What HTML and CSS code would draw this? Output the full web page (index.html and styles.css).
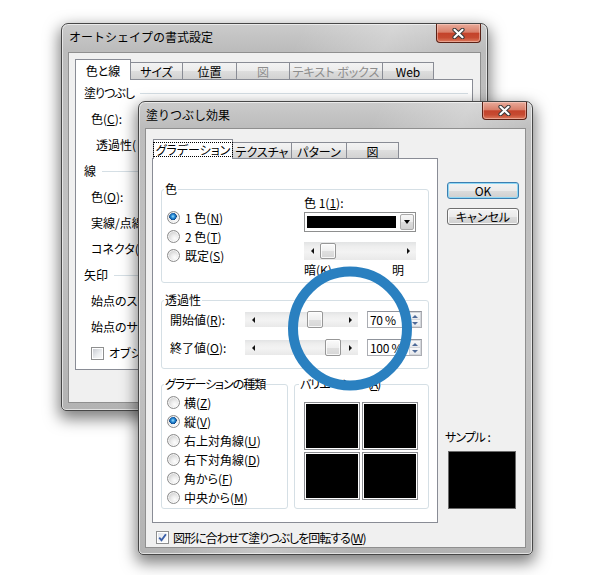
FILE: index.html
```html
<!DOCTYPE html>
<html lang="ja">
<head>
<meta charset="utf-8">
<title>塗りつぶし効果</title>
<link rel="stylesheet" href="styles.css">
</head>
<body>
<div class="desktop">

  <section class="win win-back">
    <header class="titlebar">
      <span class="title">オートシェイプの書式設定</span>
      <span class="close"><svg width="13" height="11" viewBox="0 0 13 11"><path d="M2.5 1.8L10.5 9.2M10.5 1.8L2.5 9.2" stroke="#3a3a3a" stroke-width="4.2" stroke-linecap="round"/><path d="M2.5 1.8L10.5 9.2M10.5 1.8L2.5 9.2" stroke="#fff" stroke-width="2.2" stroke-linecap="round"/></svg></span>
    </header>
    <div class="client client-back">
      <div class="tabs tabs-back">
        <span class="tab sel t-color">色と線</span>
        <span class="tab t-size">サイズ</span>
        <span class="tab t-pos">位置</span>
        <span class="tab dis t-pic">図</span>
        <span class="tab dis t-text">テキスト ボックス</span>
        <span class="tab t-web">Web</span>
      </div>
      <div class="panel panel-back">
        <div class="orow head"><span class="tk">塗りつぶし</span></div>
        <div class="orow item">色(<u>C</u>):</div>
        <div class="orow item sub">透過性(</div>
        <div class="orow head">線</div>
        <div class="orow item">色(<u>O</u>):</div>
        <div class="orow item">実線/点線</div>
        <div class="orow item">コネクタ(<u>N</u></div>
        <div class="orow head">矢印</div>
        <div class="orow item">始点のスタ</div>
        <div class="orow item">始点のサイ</div>
        <div class="orow item"><span class="checkbox"></span><span class="cb-label">オブジェ</span></div>
      </div>
    </div>
  </section>

  <section class="win win-front">
    <header class="titlebar">
      <span class="title">塗りつぶし効果</span>
      <span class="close"><svg width="13" height="11" viewBox="0 0 13 11"><path d="M2.5 1.8L10.5 9.2M10.5 1.8L2.5 9.2" stroke="#3a3a3a" stroke-width="4.2" stroke-linecap="round"/><path d="M2.5 1.8L10.5 9.2M10.5 1.8L2.5 9.2" stroke="#fff" stroke-width="2.2" stroke-linecap="round"/></svg></span>
    </header>
    <div class="client client-front">
      <div class="main">
        <div class="sheet">
          <div class="tabs tabs-front">
            <span class="tab sel t-grad"><span class="focus">グラデーション</span></span>
            <span class="tab t-tex">テクスチャ</span>
            <span class="tab t-pat">パターン</span>
            <span class="tab t-pic2">図</span>
          </div>
          <div class="panel panel-front">

            <div class="group g-color">
              <span class="group-title">色</span>
              <div class="g1-body">
                <div class="radio-col">
                  <div class="radio-row"><span class="radio on"></span><span>1 色(<u>N</u>)</span></div>
                  <div class="radio-row"><span class="radio"></span><span>2 色(<u>T</u>)</span></div>
                  <div class="radio-row"><span class="radio"></span><span>既定(<u>S</u>)</span></div>
                </div>
                <div class="color-col">
                  <div class="lbl">色 1(<u>1</u>):</div>
                  <div class="combo"><span class="swatch"></span><span class="cbtn"><i class="tri-down"></i></span></div>
                  <div class="hscroll tall">
                    <span class="sbtn"><i class="arr-l"></i></span>
                    <span class="track"><span class="thumb" style="margin-left:0px"></span></span>
                    <span class="sbtn"><i class="arr-r"></i></span>
                  </div>
                  <div class="dk-row"><span>暗(<u>K</u>)</span><span>明</span></div>
                </div>
              </div>
            </div>

            <div class="group g-trans">
              <span class="group-title">透過性</span>
              <div class="g2-body">
                <div class="trow">
                  <span class="tlabel">開始値(<u>R</u>):</span>
                  <div class="hscroll">
                    <span class="sbtn"><i class="arr-l"></i></span>
                    <span class="track"><span class="thumb" style="margin-left:46px"></span></span>
                    <span class="sbtn"><i class="arr-r"></i></span>
                  </div>
                  <div class="spin"><span class="spin-val">70 %</span><span class="updown"><span class="ud"><i class="arr-u"></i></span><span class="ud"><i class="arr-d"></i></span></span></div>
                </div>
                <div class="trow">
                  <span class="tlabel">終了値(<u>O</u>):</span>
                  <div class="hscroll">
                    <span class="sbtn"><i class="arr-l"></i></span>
                    <span class="track"><span class="thumb" style="margin-left:64px"></span></span>
                    <span class="sbtn"><i class="arr-r"></i></span>
                  </div>
                  <div class="spin"><span class="spin-val">100 %</span><span class="updown"><span class="ud"><i class="arr-u"></i></span><span class="ud"><i class="arr-d"></i></span></span></div>
                </div>
              </div>
            </div>

            <div class="types">
              <div class="group g-type">
                <span class="group-title tk">グラデーションの種類</span>
                <div class="g3-body">
                  <div class="radio-row"><span class="radio"></span><span>横(<u>Z</u>)</span></div>
                  <div class="radio-row"><span class="radio on"></span><span>縦(<u>V</u>)</span></div>
                  <div class="radio-row"><span class="radio"></span><span>右上対角線(<u>U</u>)</span></div>
                  <div class="radio-row"><span class="radio"></span><span>右下対角線(<u>D</u>)</span></div>
                  <div class="radio-row"><span class="radio"></span><span>角から(<u>F</u>)</span></div>
                  <div class="radio-row"><span class="radio"></span><span>中央から(<u>M</u>)</span></div>
                </div>
              </div>
              <div class="group g-var">
                <span class="group-title tk">バリエーション(<u>A</u>)</span>
                <div class="vgrid">
                  <span class="cell"></span><span class="cell"></span>
                  <span class="cell"></span><span class="cell"></span>
                </div>
              </div>
            </div>

          </div>
        </div>
        <div class="buttons">
          <button class="btn default">OK</button>
          <button class="btn">キャンセル</button>
          <div class="sample">
            <div class="sample-label"><span class="tk">サンプル</span> :</div>
            <div class="sample-box"></div>
          </div>
        </div>
      </div>
      <div class="check-row">
        <span class="checkbox on"><svg width="9" height="9" viewBox="0 0 9 9"><path d="M1.2 4.6L3.5 7.2L7.9 1.2" fill="none" stroke="#3a5fa8" stroke-width="1.9"/></svg></span>
        <span class="tk">図形に合わせて塗りつぶしを回転する(<u>W</u>)</span>
      </div>
    </div>
  </section>

  <svg class="mark" width="592" height="575" viewBox="0 0 592 575">
    <circle cx="350" cy="328.5" r="57" fill="none" stroke="#2a80c0" stroke-width="10"/>
  </svg>
</div>
</body>
</html>
```

FILE: styles.css
```css
* { box-sizing: border-box; }
html, body { margin: 0; padding: 0; }
body {
  background: #fff;
  font-family: "Noto Sans CJK JP", "Noto Sans", sans-serif;
  font-size: 12px;
  line-height: 14px;
  color: #000;
  font-feature-settings: "palt";
}
u { text-decoration-thickness: 1px; text-underline-offset: 1px; }
.tk { letter-spacing: -1px; }
.desktop { position: relative; width: 592px; height: 575px; overflow: hidden; }

/* windows */
.win {
  position: absolute;
  display: flex;
  flex-direction: column;
  border: 1px solid #474747;
  border-radius: 7px 7px 5px 5px;
  padding: 0 6px 6px;
  background:
    linear-gradient(115deg, rgba(255,255,255,0) 40%, rgba(255,255,255,.25) 55%, rgba(255,255,255,0) 70%),
    linear-gradient(180deg, #cbcbcb 0, #bcbcbc 26px, #c2c2c2 55%, #b3b3b3 100%);
  box-shadow: 0 6px 15px 2px rgba(0,0,0,.5), inset 0 0 0 1px rgba(255,255,255,.6);
}
.win-back { left: 61px; top: 23px; width: 427px; height: 388px; padding-bottom: 7px; }
.win-front { left: 138px; top: 101px; width: 395px; height: 454px; }

.titlebar { flex: none; display: flex; justify-content: space-between; align-items: flex-start; }
.win-back .titlebar { height: 28px; }
.win-front .titlebar { height: 26px; }
.title { margin: 6px 0 0 1px; font-feature-settings: normal; }
.close {
  width: 45px; height: 19px;
  display: flex; align-items: center; justify-content: center;
  border: 1px solid #5a2116;
  border-top: none;
  border-radius: 0 0 4px 4px;
  background: linear-gradient(180deg, #e9ab9a 0, #d9806b 45%, #c4432b 52%, #c64a31 75%, #dc7a5d 100%);
  box-shadow: inset 0 0 0 1px rgba(255,220,210,.45);
}
.win-front .close { height: 18px; margin-right: -1px; }

.client {
  flex: 1;
  display: flex;
  flex-direction: column;
  background: #f0f0f0;
  border: 1px solid #8f8f8f;
}
.client-back { padding: 6px 7px 0 6px; }
.client-front { padding: 10px 6px 3px 6px; }

/* tabs */
.tabs { display: flex; align-items: flex-end; position: relative; z-index: 1; flex: none; }
.tabs-back { height: 20px; }
.tabs-front { height: 19px; margin-left: 1px; }
.tab {
  display: flex; align-items: center; justify-content: center;
  border: 1px solid #898c95;
  border-bottom: none;
  margin-left: -1px;
  background: linear-gradient(180deg, #f3f3f3 0, #ebebeb 50%, #dedede 50%, #d2d2d2 100%);
  white-space: nowrap;
}
.tab:first-child { margin-left: 0; }
.tabs-back .tab { height: 17px; padding-top: 1px; }
.tabs-front .tab { height: 16px; padding-top: 2px; }
.tab.sel { background: #fff; position: relative; z-index: 1; margin-bottom: -1px; }
.tabs-back .tab.sel { height: 21px; padding-top: 1px; }
.tabs-front .tab.sel { height: 20px; padding-top: 0; }
.tab.dis { color: #8d8d8d; }
.t-color { width: 56px; } .t-size { width: 53px; } .t-pos { width: 55px; }
.t-pic { width: 54px; } .t-text { width: 94px; } .t-web { width: 52px; }
.t-grad { width: 80px; } .t-tex { width: 60px; } .t-pat { width: 56px; } .t-pic2 { width: 53px; }
.focus { border: 1px dotted #000; padding: 0 2px; line-height: 13px; }

/* panels */
.panel { background: #fff; border: 1px solid #898c95; }
.panel-back { width: 398px; height: 291px; padding: 0 4px 0 8px; }
.panel-front { padding: 30px 8px 13px; }

/* back panel rows */
.orow { height: 26px; display: flex; align-items: center; white-space: nowrap; }
.orow.head::after { content: ""; flex: 1; height: 1px; background: #d5dfe5; margin-left: 6px; }
.orow.item { padding-left: 7px; }
.orow.sub { padding-left: 12px; }
.cb-label { margin-left: 5px; }

/* checkbox / radio */
.checkbox {
  width: 13px; height: 13px; flex: none;
  display: flex; align-items: center; justify-content: center;
  border: 1px solid #8e8f8f;
  padding: 1px;
  background: linear-gradient(135deg, #c9ccd2 0, #eceef0 60%, #f8f8f8 100%) content-box, #fff;
}
.checkbox.on { background: linear-gradient(135deg, #dfe3ea 0, #f4f5f7 60%, #fbfbfb 100%) content-box, #fff; }
.radio {
  width: 13px; height: 13px; flex: none;
  border-radius: 50%;
  border: 1px solid #8c8c8c;
  background: radial-gradient(circle at 62% 68%, #fdfdfd 0, #ececec 35%, #cfcfcf 75%, #bdbdbd 100%);
  box-shadow: inset 0 0 0 1px rgba(255,255,255,.7);
}
.radio.on {
  background:
    radial-gradient(circle at 45% 40%, #9ee0ff 0, #2b8fd8 1.8px, #135aa3 3.2px, #0d3f78 3.6px, rgba(0,0,0,0) 3.8px),
    radial-gradient(circle at 62% 68%, #fdfdfd 0, #ececec 35%, #cfcfcf 75%, #bdbdbd 100%);
}
.radio-row { display: flex; align-items: center; gap: 5px; height: 19px; white-space: nowrap; }

/* groups */
.group { border: 1px solid #d5dfe5; border-radius: 3px; background: #fff; }
.group-title {
  display: block; width: max-content;
  margin: -8px 0 0 2px; padding: 0 1px;
  background: #fff; line-height: 14px; white-space: nowrap;
}
.g-var .group-title { margin-left: 4px; }

.g1-body { display: flex; justify-content: space-between; padding: 0 12px 5px 5px; }
.radio-col { display: flex; flex-direction: column; justify-content: center; }
.color-col { width: 112px; display: flex; flex-direction: column; }
.combo {
  margin-top: 2px; height: 20px;
  display: flex; align-items: center;
  border: 1px solid #8e8f8f; background: #fff;
  padding: 0 1px 0 2px;
}
.swatch { flex: 1; height: 12px; background: #000; }
.cbtn {
  width: 14px; height: 16px; margin-left: 4px;
  display: flex; align-items: center; justify-content: center;
  border: 1px solid #a9a9a9; border-radius: 2px;
  background: linear-gradient(180deg, #f7f7f7 0, #ececec 50%, #dcdcdc 51%, #d0d0d0 100%);
}
.tri-down { width: 0; height: 0; border-left: 3.5px solid transparent; border-right: 3.5px solid transparent; border-top: 4px solid #000; }
.dk-row { margin-top: 3px; display: flex; justify-content: space-between; padding-right: 12px; }

/* scrollbars */
.hscroll {
  width: 113px; height: 15px; flex: none;
  display: flex;
  background: linear-gradient(180deg, #e2e3e4 0, #eeeeee 25%, #f3f3f3 55%, #e9e9e9 100%);
}
.hscroll.tall { width: auto; height: 18px; margin-top: 10px; }
.sbtn { width: 16px; flex: none; display: flex; align-items: center; justify-content: center; }
.track { flex: 1; display: flex; align-items: center; }
.thumb {
  width: 16px; height: 17px; flex: none;
  border: 1px solid #979797; border-radius: 2px;
  background: linear-gradient(180deg, #fbfbfb 0, #efefef 50%, #e0e0e0 51%, #d6d6d6 100%);
  box-shadow: inset 0 0 0 1px rgba(255,255,255,.8);
}
.hscroll.tall .thumb { height: 16px; }
.arr-l { width: 0; height: 0; border-top: 3.5px solid transparent; border-bottom: 3.5px solid transparent; border-right: 3.5px solid #111; }
.arr-r { width: 0; height: 0; border-top: 3.5px solid transparent; border-bottom: 3.5px solid transparent; border-left: 3.5px solid #111; }

/* transparency */
.g2-body { padding: 4px 6px 12px 8px; display: flex; flex-direction: column; gap: 11px; }
.trow { display: flex; align-items: center; height: 17px; }
.tlabel { width: 75px; flex: none; white-space: nowrap; }
.spin {
  width: 55px; height: 17px; margin-left: 9px;
  display: flex;
  border: 1px solid #abadb3; border-top-color: #8f939b;
  background: #fff;
}
.spin-val { flex: 1; padding-left: 2px; line-height: 15px; white-space: nowrap; letter-spacing: -0.3px; }
.updown { width: 12px; display: flex; flex-direction: column; }
.ud {
  flex: 1; display: flex; align-items: center; justify-content: center;
  border: 1px solid #d3d6db;
  background: linear-gradient(180deg, #f7f8f9, #e7e9ec);
}
.ud + .ud { border-top: none; }
.arr-u { width: 0; height: 0; border-left: 3px solid transparent; border-right: 3px solid transparent; border-bottom: 3px solid #4e6a98; }
.arr-d { width: 0; height: 0; border-left: 3px solid transparent; border-right: 3px solid transparent; border-top: 3px solid #4e6a98; }

/* type / variation */
.g-trans { margin-top: 17px; }
.types { display: flex; gap: 6px; margin-top: 15px; }
.g-type { width: 127px; }
.g-var { width: 135px; }
.g3-body { padding: 2px 0 1px 5px; }
.g3-body .radio-row { gap: 4px; }
.vgrid {
  display: grid;
  grid-template-columns: 56px 56px;
  grid-template-rows: 48px 48px;
  gap: 2px;
  margin: 11px 0 0 9px;
}
.cell { border: 1px solid #8b8d91; background: #000; box-shadow: inset 0 0 0 1px #fff; }

/* right column */
.main { display: flex; gap: 9px; }
.sheet { width: 286px; display: flex; flex-direction: column; }
.buttons { width: 72px; display: flex; flex-direction: column; padding: 43px 0 14px; }
.btn {
  height: 17px; padding: 0; margin: 0;
  font: inherit; color: #000;
  display: flex; align-items: center; justify-content: center;
  border: 1px solid #707070; border-radius: 3px;
  background: linear-gradient(180deg, #f3f3f3 0, #ebebeb 50%, #dddddd 50%, #cfcfcf 100%);
  box-shadow: inset 0 0 0 1px rgba(255,255,255,.85);
}
.btn.default { border-color: #3c7fb1; box-shadow: inset 0 0 0 1px #8fd8f5; }
.btn + .btn { margin-top: 9px; }
.sample { margin-top: auto; }
.sample-label { margin-left: -2px; white-space: pre; font-feature-settings: normal; }
.sample-label .tk { font-feature-settings: "palt"; }
.sample-box { margin: 7px 0 0 1px; width: 68px; height: 58px; background: #000; border: 1px solid #6b6b6b; }

.check-row { display: flex; align-items: center; gap: 4px; height: 13px; margin: 8px 0 0 4px; white-space: nowrap; }

.mark { position: absolute; left: 0; top: 0; pointer-events: none; }
```
